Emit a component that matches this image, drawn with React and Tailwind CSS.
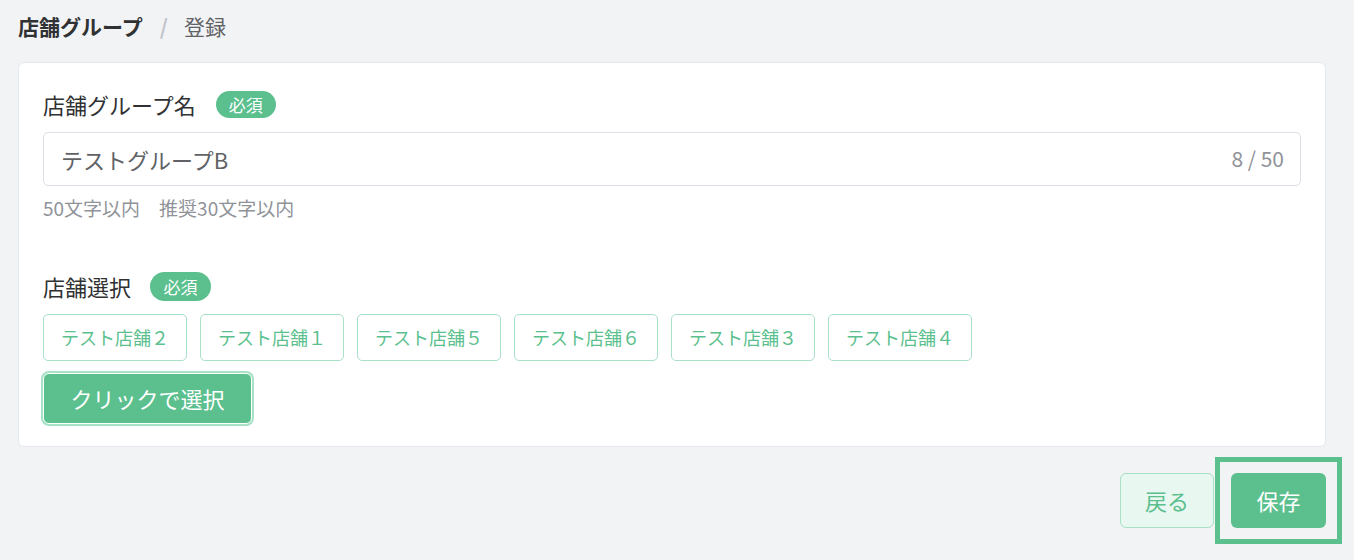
export default function App() {
  const stores = ["テスト店舗２", "テスト店舗１", "テスト店舗５", "テスト店舗６", "テスト店舗３", "テスト店舗４"];
  return (
    <div
      className="min-h-[560px] w-[1354px] bg-[#f2f3f5] pl-[18px] pr-[28px] pt-[14px] text-[#303133]"
      style={{ fontFamily: '"Noto Sans CJK JP", "Noto Sans", sans-serif' }}
    >
      <div className="flex h-[24px] items-center text-[21px] leading-[24px]">
        <span className="font-bold text-[#303133]">店舗グループ</span>
        <span className="ml-[17px] mr-[16px] font-bold text-[#c0c4cc]">/</span>
        <span className="text-[#606266]">登録</span>
      </div>

      <div className="mt-[24px] rounded-[6px] border border-[#e4e7ed] bg-white px-[24px] pb-[22px] pt-[28px]">
        <div className="flex h-[27px] items-center gap-[20px]">
          <span className="text-[22px] leading-[27px] text-[#303133]">店舗グループ名</span>
          <span className="flex h-[27px] w-[60px] items-center justify-center rounded-full bg-[#5bbf8e] text-[17px] leading-none text-white">
            必須
          </span>
        </div>

        <div className="mt-[14px] flex h-[54px] items-center justify-between rounded-[5px] border border-[#dcdfe6] pl-[17px] pr-[16px]">
          <span className="text-[22px] text-[#606266]">テストグループB</span>
          <span className="text-[21px] text-[#909399]">8 / 50</span>
        </div>

        <div className="mt-[12px] h-[20px] text-[19px] leading-[20px] text-[#909399]">
          50文字以内　推奨30文字以内
        </div>

        <div className="mt-[54px] flex h-[29px] items-center gap-[19px]">
          <span className="text-[22px] leading-[29px] text-[#303133]">店舗選択</span>
          <span className="flex h-[29px] w-[61px] items-center justify-center rounded-full bg-[#5bbf8e] text-[17px] leading-none text-white">
            必須
          </span>
        </div>

        <div className="mt-[13px] flex flex-wrap gap-[13px]">
          {stores.map((s) => (
            <div
              key={s}
              className="flex h-[47px] w-[144px] items-center justify-center rounded-[5px] border border-[#a7e1c6] bg-white text-[18px] text-[#5bbf8e]"
            >
              {s}
            </div>
          ))}
        </div>

        <button className="mt-[12px] flex h-[51px] w-[209px] items-center justify-center rounded-[6px] border border-white bg-[#5bbf8e] text-[22px] text-white ring-2 ring-[#a7e1c6]">
          クリックで選択
        </button>
      </div>

      <div className="mt-[26px] flex justify-end gap-[17px]">
        <button className="flex h-[55px] w-[94px] items-center justify-center rounded-[6px] border border-[#a7e1c6] bg-[#e9f7f1] text-[22px] text-[#5bbf8e]">
          戻る
        </button>
        <div className="relative">
          <button className="flex h-[55px] w-[95px] items-center justify-center rounded-[6px] bg-[#5bbf8e] text-[22px] text-white">
            保存
          </button>
          <span className="pointer-events-none absolute -inset-[16px] border-[5px] border-[#5bbf8e]" />
        </div>
      </div>
    </div>
  );
}
